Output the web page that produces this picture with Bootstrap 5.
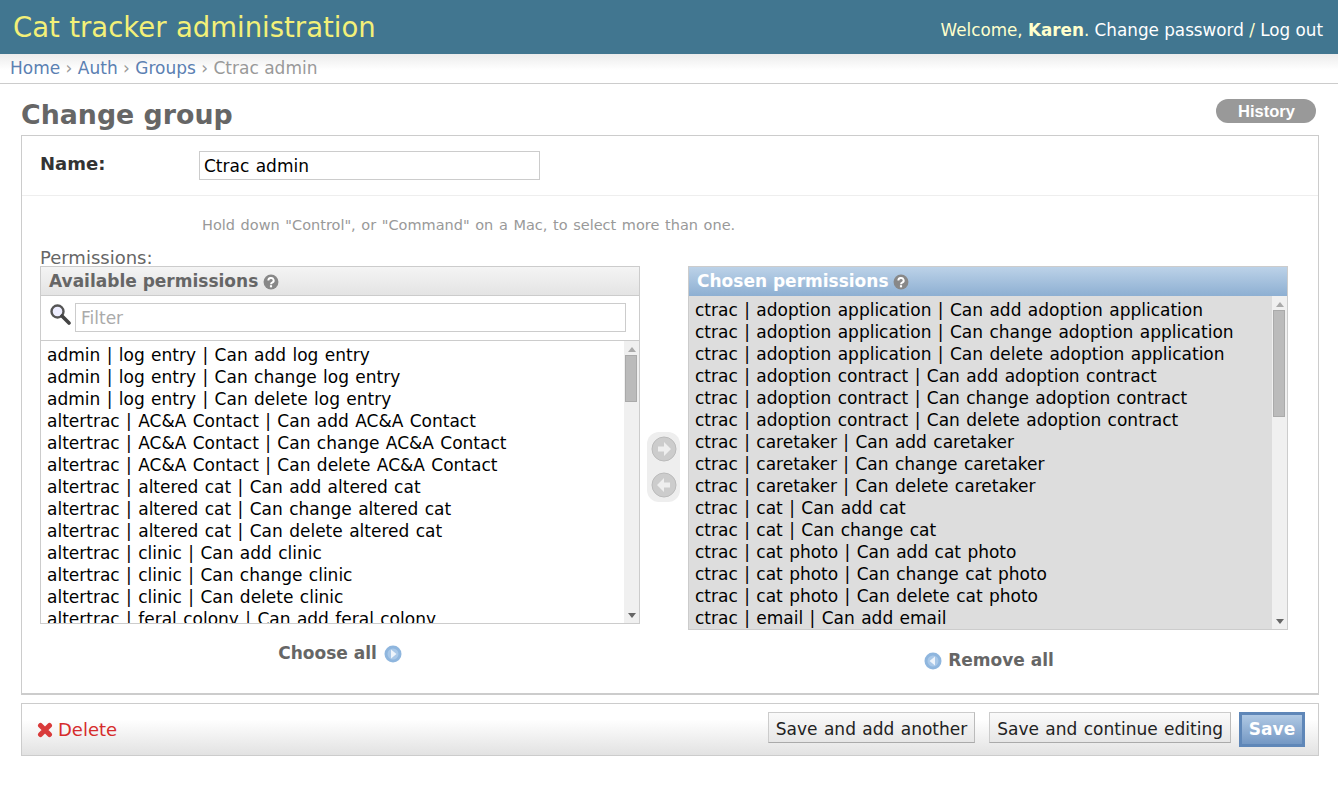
<!DOCTYPE html>
<html lang="en">
<head>
    <meta charset="UTF-8">
    <meta name="viewport" content="width=device-width, initial-scale=1.0">
    <title>Change group | Cat tracker administration</title>
    <link href="https://cdn.jsdelivr.net/npm/bootstrap@5.3.0/dist/css/bootstrap.min.css" rel="stylesheet">
    <style>
        body { font-family: "DejaVu Sans", sans-serif; font-size: 17px; color: #333; background: #fff; overflow: hidden; }
        a { text-decoration: none; }
        .site-head { height: 54px; background: #417690; padding: 0 15px 0 13px; }
        .site-title { font-size: 27.5px; font-weight: 400; margin: 0; line-height: 54px; color: #f3f078; word-spacing: .7px; }
        .user-tools { font-size: 16.8px; color: #ffc; line-height: 60px; }
        .user-tools a { color: #fff; }
        .crumbs { height: 30px; padding: 0 10px; line-height: 29px; font-size: 17px; color: #999; border-bottom: 1px solid #ccc; background: linear-gradient(#ececec, #fff 55%); }
        .crumbs a { color: #5b80b2; }
        .page-body { padding: 0 19px 0 21px; }
        .page-top { height: 51px; }
        .page-title { font-size: 26.8px; font-weight: 700; color: #666; margin: 0; line-height: 1; padding-top: 18px; }
        .hist-btn { width: 100px; height: 24px; margin: 15px 3px 0 0; padding-left: 1px; border-radius: 12px; background: #999; color: #fff; font: 700 16.5px/25px "Liberation Sans", sans-serif; text-align: center; }
        .form-box { border: 1px solid #ccc; height: 560px; border-width: 1px 1px 2px 1px; }
        .name-row { height: 60px; padding: 15px 18px; border-bottom: 1px solid #eee; }
        .name-label { width: 159px; font-size: 18px; font-weight: 700; line-height: 25px; }
        .name-input { width: 341px; height: 29px; border: 1px solid #ccc; padding: 1px 4px 0; font: inherit; color: #000; word-spacing: 1px; }
        .help-line { font-size: 14.5px; color: #999; padding: 19px 0 0 180px; line-height: 20px; word-spacing: 1px; }
        .perm-label { color: #666; font-size: 18px; line-height: 22px; padding: 12px 0 0 18px; height: 31px; }
        .picker-row { padding-left: 18px; }
        .picker { width: 600px; }
        .picker-head { height: 30px; border: 1px solid #ccc; padding-left: 8px; font-weight: 700; line-height: 28px; color: #666; background: linear-gradient(#f4f4f4, #e4e4e4); }
        .picker-head.on { color: #fff; background: linear-gradient(#bcd2e8, #8dafd2); border-bottom: 0; }
        .help-ico { vertical-align: -3px; margin-left: -1px; }
        .filter-row { height: 45px; border: 1px solid #ccc; border-width: 0 1px 1px; padding: 7px 13px 0 8px; }
        .filter-box { flex: 1; height: 29px; border: 1px solid #ccc; padding: 0 5px; color: #aaa; line-height: 29px; }
        .opt-list { position: relative; overflow: hidden; border: 1px solid #ccc; border-top: 0; margin: 0; padding: 3px 6px 0; height: 283px; color: #000; line-height: 22px; white-space: nowrap; word-spacing: 1px; }
        .opt-list.chosen { height: 334px; background: #ddd; }
        .opt-list li { height: 22px; }
        .sbar { position: absolute; top: 0; right: 0; bottom: 0; width: 15px; background: #f0f0f0; }
        .sbar-arr { position: absolute; right: 3px; width: 0; height: 0; border-left: 4px solid transparent; border-right: 4px solid transparent; }
        .sbar-arr.up { top: 6px; border-bottom: 5px solid #aaa; }
        .sbar-arr.down { bottom: 5px; border-top: 5px solid #666; }
        .sbar-thumb { position: absolute; top: 14px; left: 1px; width: 12px; height: 47px; background: #bbb; border: 1px solid #aaa; }
        .chosen .sbar-thumb { height: 107px; }
        .picker-mid { width: 48px; }
        .mid-pill { width: 33px; height: 70px; margin: 166px 0 0 7px; border-radius: 12px; background: #eee; padding-top: 4px; }
        .mid-pill svg { display: block; margin: 0 auto 10px; }
        .pick-all { font-weight: 700; color: #666; text-align: center; line-height: 20px; }
        .pick-gap { margin-top: 19px; }
        .pick-all svg { vertical-align: -4px; }
        .pick-choose svg { margin-left: 1px; }
        .pick-remove { padding-left: 2px; margin-top: 20px; }
        .submit-bar { height: 53px; margin-top: 8px; border: 1px solid #ccc; padding: 8px 13px 0 15px; background: linear-gradient(#fff 30%, #e2e2e2); }
        .del-link { color: #d62c2c; font-size: 18px; line-height: 36px; }
        .del-link svg { vertical-align: -2px; margin-right: 5px; }
        .save-btn { height: 31px; border: 1px solid #ccc; border-bottom-color: #aaa; border-right-color: #bbb; padding: 2px 7px 0; font: inherit; color: #222; background: linear-gradient(#fafafa, #e6e6e6); line-height: 29px; word-spacing: 1px; }
        .save-gap { margin-left: 14px; }
        .save-main { height: 35px; width: 66px; border: 3px solid #5f87b8; padding: 0; font-weight: 700; color: #fff; background: linear-gradient(#b0c9e4, #7498c4); }
    </style>
</head>
<body>

    <div class="site-head d-flex justify-content-between">
        <h1 class="site-title">Cat tracker administration</h1>
        <div class="user-tools">Welcome, <b>Karen</b>. <a href="#">Change password</a> / <a href="#">Log out</a></div>
    </div>
    <div class="crumbs"><a href="#">Home</a> › <a href="#">Auth</a> › <a href="#">Groups</a> › Ctrac admin</div>

    <div class="page-body">
        <div class="page-top d-flex justify-content-between">
            <h2 class="page-title">Change group</h2>
            <a href="#" class="hist-btn">History</a>
        </div>

        <form class="form-box">
            <div class="name-row d-flex">
                <label class="name-label">Name:</label>
                <input class="name-input" type="text" value="Ctrac admin">
            </div>
            <div class="help-line">Hold down "Control", or "Command" on a Mac, to select more than one.</div>
            <div class="perm-label">Permissions:</div>
            <div class="picker-row d-flex">
                <div class="picker">
                    <div class="picker-head">Available permissions <svg class="help-ico" width="16" height="16" viewBox="0 0 15 15"><circle cx="7.500" cy="7.500" r="7" fill="#888"/><path d="M5 6a2.500 2.300 0 1 1 3.600 2.100c-.8.4-1.100.8-1.100 1.500" fill="none" stroke="#fff" stroke-width="1.800"/><rect x="6.500" y="10.500" width="2" height="2" fill="#fff"/></svg></div>
                    <div class="filter-row d-flex gap-1">
                        <svg width="22" height="24" viewBox="0 0 22 24"><circle cx="8.500" cy="8.500" r="6" fill="#eef" stroke="#555" stroke-width="2.400"/><path d="M13 13l7 7" stroke="#444" stroke-width="3.600" stroke-linecap="round"/></svg>
                        <div class="filter-box">Filter</div>
                    </div>
                    <ul class="opt-list list-unstyled" id="avail"></ul>
                    <div class="pick-all pick-choose pick-gap"><a href="#" class="pick-all">Choose all</a> <svg width="18" height="18" viewBox="0 0 18 18"><circle cx="9" cy="9" r="8.500" fill="#8fb6de"/><circle cx="9" cy="9" r="5.500" fill="#a9c8e8"/><path d="M7 4.500l5.500 4.500L7 13.500z" fill="#eef4fb"/></svg></div>
                </div>
                <div class="picker-mid">
                    <div class="mid-pill">
                        <svg width="26" height="26" viewBox="0 0 26 26"><circle cx="13" cy="13" r="12" fill="#ccc" stroke="#bbb"/><path d="M7 10.500h6V6l7 7-7 7v-4.500H7z" fill="#eee"/></svg>
                        <svg width="26" height="26" viewBox="0 0 26 26"><circle cx="13" cy="13" r="12" fill="#ccc" stroke="#bbb"/><path d="M19 10.500h-6V6l-7 7 7 7v-4.500h6z" fill="#eee"/></svg>
                    </div>
                </div>
                <div class="picker">
                    <div class="picker-head on">Chosen permissions <svg class="help-ico" width="16" height="16" viewBox="0 0 15 15"><circle cx="7.500" cy="7.500" r="7" fill="#888"/><path d="M5 6a2.500 2.300 0 1 1 3.600 2.100c-.8.4-1.100.8-1.100 1.500" fill="none" stroke="#fff" stroke-width="1.800"/><rect x="6.500" y="10.500" width="2" height="2" fill="#fff"/></svg></div>
                    <ul class="opt-list chosen list-unstyled" id="chosen"></ul>
                    <div class="pick-all pick-remove"><svg width="18" height="18" viewBox="0 0 18 18"><circle cx="9" cy="9" r="8.500" fill="#8fb6de"/><circle cx="9" cy="9" r="5.500" fill="#a9c8e8"/><path d="M11 4.500L5.500 9l5.500 4.500z" fill="#eef4fb"/></svg> <a href="#" class="pick-all">Remove all</a></div>
                </div>
            </div>
        </form>

        <div class="submit-bar d-flex align-items-start">
            <a href="#" class="del-link me-auto"><svg width="16" height="16" viewBox="0 0 16 16"><path d="M3.500 3.500l9 9M12.500 3.500l-9 9" stroke="#d93a3a" stroke-width="5" stroke-linecap="round"/></svg>Delete</a>
            <button type="button" class="save-btn">Save and add another</button>
            <button type="button" class="save-btn save-gap">Save and continue editing</button>
            <button type="button" class="save-btn save-main ms-2">Save</button>
        </div>
    </div>

    <script>
        const avail = [
            "admin | log entry | Can add log entry", "admin | log entry | Can change log entry", "admin | log entry | Can delete log entry",
            "altertrac | AC&A Contact | Can add AC&A Contact", "altertrac | AC&A Contact | Can change AC&A Contact", "altertrac | AC&A Contact | Can delete AC&A Contact",
            "altertrac | altered cat | Can add altered cat", "altertrac | altered cat | Can change altered cat", "altertrac | altered cat | Can delete altered cat",
            "altertrac | clinic | Can add clinic", "altertrac | clinic | Can change clinic", "altertrac | clinic | Can delete clinic",
            "altertrac | feral colony | Can add feral colony"
        ];
        const chosen = [
            "ctrac | adoption application | Can add adoption application", "ctrac | adoption application | Can change adoption application", "ctrac | adoption application | Can delete adoption application",
            "ctrac | adoption contract | Can add adoption contract", "ctrac | adoption contract | Can change adoption contract", "ctrac | adoption contract | Can delete adoption contract",
            "ctrac | caretaker | Can add caretaker", "ctrac | caretaker | Can change caretaker", "ctrac | caretaker | Can delete caretaker",
            "ctrac | cat | Can add cat", "ctrac | cat | Can change cat",
            "ctrac | cat photo | Can add cat photo", "ctrac | cat photo | Can change cat photo", "ctrac | cat photo | Can delete cat photo",
            "ctrac | email | Can add email"
        ];
        const bar = '<div class="sbar"><span class="sbar-arr up"></span><span class="sbar-thumb"></span><span class="sbar-arr down"></span></div>';
        function fill(id, rows) {
            const el = document.getElementById(id);
            rows.forEach(r => {
                const li = document.createElement("li");
                li.textContent = r;
                el.appendChild(li);
            });
            el.insertAdjacentHTML("beforeend", bar);
        }
        fill("avail", avail);
        fill("chosen", chosen);
    </script>

    <script src="https://cdn.jsdelivr.net/npm/bootstrap@5.3.0/dist/js/bootstrap.bundle.min.js"></script>
</body>
</html>
